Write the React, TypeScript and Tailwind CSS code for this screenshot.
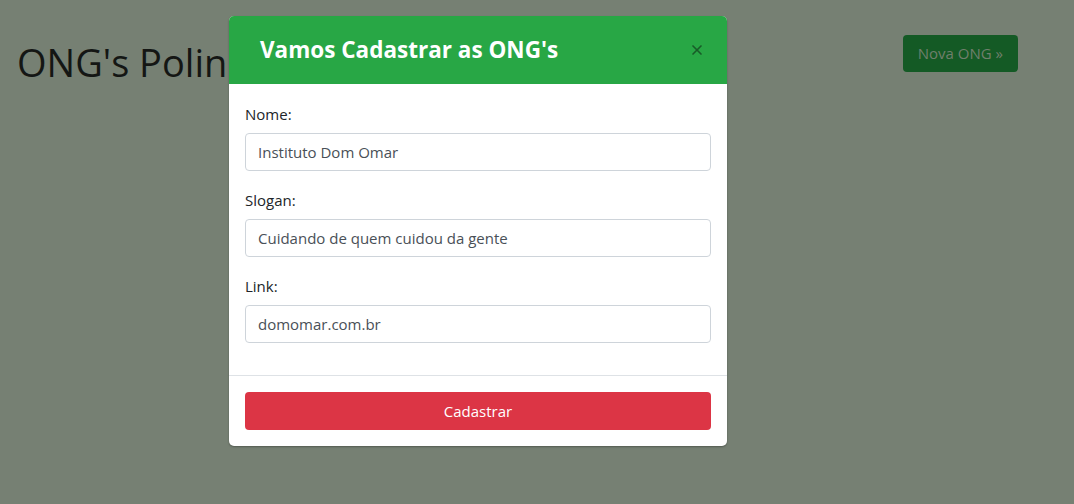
import { X } from 'lucide-react';

const font = { fontFamily: '"Open Sans", "Noto Sans", sans-serif' };

function Field({ label, value }: { label: string; value: string }) {
  return (
    <div className="mb-[18px]">
      <label className="block text-[15px] leading-[22px] text-[#212529] mb-[8px]">{label}</label>
      <input
        readOnly
        value={value}
        className="w-full h-[38px] px-[12px] text-[15px] text-[#495057] border border-[#ced4da] rounded-[4px] bg-white outline-none"
      />
    </div>
  );
}

export default function App() {
  return (
    <div className="relative w-[1074px] h-[504px] bg-[#768073] overflow-hidden" style={font}>
      <div className="flex items-start justify-between pl-[17px] pr-[56px] pt-[35px]">
        <h1 className="text-[38px] leading-[54px] font-medium text-[#141614]">ONG's Polinização</h1>
        <button className="h-[37px] px-[15px] rounded-[4px] bg-[#145a25] text-[#6f7f6c] text-[15px]">
          Nova ONG »
        </button>
      </div>

      <div className="absolute left-[229px] top-[16px] w-[498px] bg-white rounded-[5px] overflow-hidden shadow-[0_1px_2px_rgba(0,0,0,0.3)]">
        <div className="h-[68px] bg-[#28a745] flex items-center justify-between pl-[31px] pr-[22px]">
          <h5 className="text-[22.5px] font-bold text-white">Vamos Cadastrar as ONG's</h5>
          <X size={16} strokeWidth={2.5} className="text-[#185c28]" />
        </div>
        <div className="px-[16px] pt-[19px] pb-[14px] border-b border-[#dee2e6]">
          <Field label="Nome:" value="Instituto Dom Omar" />
          <Field label="Slogan:" value="Cuidando de quem cuidou da gente" />
          <Field label="Link:" value="domomar.com.br" />
        </div>
        <div className="px-[16px] pt-[16px] pb-[16px]">
          <button className="w-full h-[38px] rounded-[4px] bg-[#dc3545] text-white text-[15px]">Cadastrar</button>
        </div>
      </div>
    </div>
  );
}
